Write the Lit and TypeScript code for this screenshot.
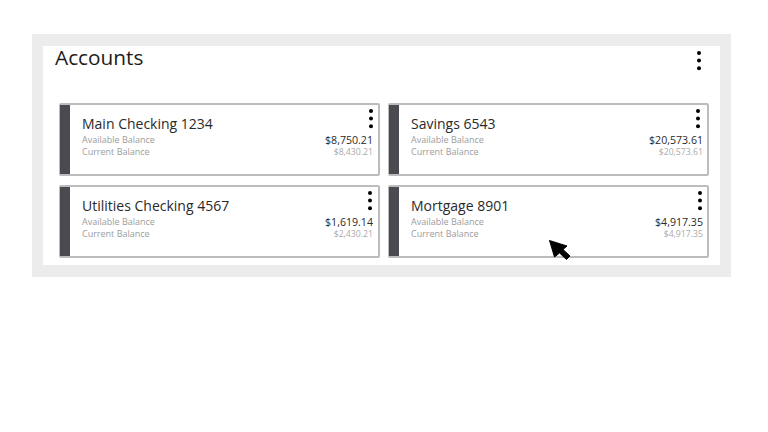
import { LitElement, html, css } from "lit";
import { customElement } from "lit/decorators.js";

const kebab = () => html`<svg class="kebab" width="6" height="21" viewBox="0 0 6 21"><circle cx="3" cy="3" r="2"/><circle cx="3" cy="10.6" r="2"/><circle cx="3" cy="18.2" r="2"/></svg>`;

const accounts = [
  { name: "Main Checking 1234", avail: "$8,750.21", cur: "$8,430.21", k: -0.7 },
  { name: "Savings 6543", avail: "$20,573.61", cur: "$20,573.61", k: 2 },
  { name: "Utilities Checking 4567", avail: "$1,619.14", cur: "$2,430.21", k: 0.5 },
  { name: "Mortgage 8901", avail: "$4,917.35", cur: "$4,917.35", k: 0 },
];

@customElement("app-root")
export class AppRoot extends LitElement {
  static styles = css`
    :host { display: block; position: relative; height: 432px; padding: 34px 37px 0 32px; box-sizing: border-box; background: #fff; font-family: "Open Sans", sans-serif; color: #222; }
    .panel { background: #ececec; height: 243px; padding: 12px 11px; box-sizing: border-box; }
    .inner { background: #fff; height: 219px; padding: 0 11px 0 12px; box-sizing: border-box; display: flex; flex-direction: column; }
    .head { display: flex; justify-content: space-between; height: 57px; padding-right: 7.5px; }
    h1 { margin: -1px 0 0; font-size: 20.8px; font-weight: 400; line-height: 24px; color: #1c1c1c; }
    .head .kebab { margin-top: 4px; }
    .grid { display: grid; grid-template-columns: 321px 321px; grid-auto-rows: 73px; gap: 9px 8px; padding-left: 4px; }
    .card { display: flex; border: 2px solid #bcbcbc; border-radius: 2px; box-sizing: border-box; background: #fff; }
    .bar { width: 10px; margin-left: -1px; background: #4a4a50; flex: none; }
    .body { flex: 1; display: flex; justify-content: space-between; padding: 0 5px 0 12px; }
    .card:nth-child(even) .body { padding-right: 4px; }
    .left { padding-top: 9px; }
    .name { font-size: 14px; line-height: 20px; color: #2a2a2a; }
    .lab { font-size: 9px; line-height: 12px; color: #9c9c9c; }
    .right { display: flex; flex-direction: column; align-items: flex-end; padding-top: 3px; }
    .kebab { fill: #000; display: block; }
    .kwrap { display: block; margin-bottom: 1px; margin-right: var(--k, 0); }
    .avail { font-size: 10.6px; line-height: 12px; color: #2a2a2a; margin-top: 3.5px; }
    .cur { font-size: 8.7px; line-height: 12px; color: #aaa; }
    .cursor { position: absolute; left: 548px; top: 238px; }
  `;

  render() {
    return html`
      <div class="panel">
        <div class="inner">
          <div class="head"><h1>Accounts</h1>${kebab()}</div>
          <div class="grid">
            ${accounts.map(a => html`
              <div class="card">
                <div class="bar"></div>
                <div class="body">
                  <div class="left">
                    <div class="name">${a.name}</div>
                    <div class="lab">Available Balance</div>
                    <div class="lab">Current Balance</div>
                  </div>
                  <div class="right">
                    <span class="kwrap" style="--k:${a.k}px">${kebab()}</span>
                    <div class="avail">${a.avail}</div>
                    <div class="cur">${a.cur}</div>
                  </div>
                </div>
              </div>`)}
          </div>
        </div>
      </div>
      <svg class="cursor" width="24" height="24" viewBox="0 0 24 24">
        <path d="M1.5 2.5 L19 8 L15 11.5 L22 18 L18.5 21.5 L11.5 15 L6.5 19 Z" fill="#000" stroke="#000" stroke-width="1" stroke-linejoin="round"/>
      </svg>
    `;
  }
}
